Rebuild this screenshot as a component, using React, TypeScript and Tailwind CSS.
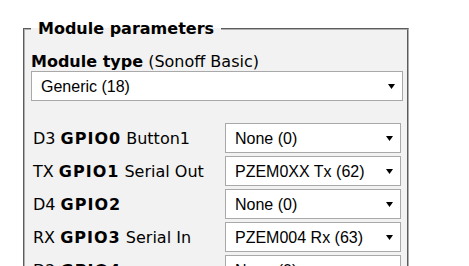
const gpios = [
  { pin: "D3", gpio: "GPIO0", name: "Button1", value: "None (0)" },
  { pin: "TX", gpio: "GPIO1", name: "Serial Out", value: "PZEM0XX Tx (62)" },
  { pin: "D4", gpio: "GPIO2", name: "", value: "None (0)" },
  { pin: "RX", gpio: "GPIO3", name: "Serial In", value: "PZEM004 Rx (63)" },
  { pin: "D2", gpio: "GPIO4", name: "", value: "None (0)" },
];

function Select({ value, width }: { value: string; width: string }) {
  return (
    <div
      className={`${width} h-[30px] shrink-0 flex items-center justify-between border border-[#a9a9a9] bg-white pl-[9px] pr-[7px] text-[16px] text-black font-['Liberation_Sans',Arial,sans-serif]`}
    >
      <span>{value}</span>
      <svg width="7" height="5" viewBox="0 0 7 5">
        <polygon points="0,0 7,0 3.5,5" fill="#000" />
      </svg>
    </div>
  );
}

export default function App() {
  return (
    <div className="w-[469px] h-[266px] overflow-hidden bg-white pt-[19px] pl-[23px] text-black font-['DejaVu_Sans',Verdana,sans-serif] text-[16px] leading-[19px]">
      <fieldset className="w-[386px] h-[300px] border-2 [border-style:groove] border-[#b0b0b0] bg-[#f2f2f2] pl-[6px]">
        <legend className="px-[7px] font-bold">Module parameters</legend>
        <div className="mt-[14px]">
          <b>Module type</b> (Sonoff Basic)
        </div>
        <Select value="Generic (18)" width="w-[372px]" />
        <div className="mt-[22px] flex flex-col gap-[3px]">
          {gpios.map((g) => (
            <div key={g.gpio} className="flex items-center h-[30px]">
              <div className="w-[194px] pl-[2px] whitespace-nowrap">
                {g.pin} <b className="tracking-[1px]">{g.gpio}</b>
                {g.name ? ` ${g.name}` : ""}
              </div>
              <Select value={g.value} width="w-[176px]" />
            </div>
          ))}
        </div>
      </fieldset>
    </div>
  );
}
